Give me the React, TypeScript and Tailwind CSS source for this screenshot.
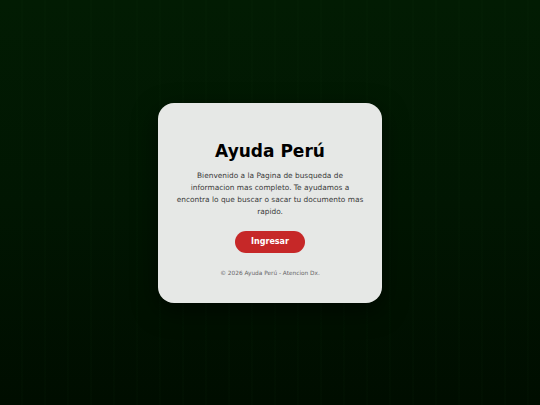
import React from "react";

/** Landing card for "Ayuda Perú" over a dark green backdrop. */
export default function App() {
  return (
    <div
      className="flex h-[405px] w-full items-center justify-center bg-[linear-gradient(180deg,#021c03_0%,#011602_50%,#000d00_100%)]"
      style={{ fontFamily: '"DejaVu Sans", Verdana, sans-serif' }}
    >
      <div className="relative h-full w-full">
        {/* faint vertical streaks */}
        <div className="absolute inset-0 bg-[repeating-linear-gradient(90deg,transparent_0px,transparent_21px,rgba(20,60,20,0.12)_22px,transparent_23px)]" />
        <div className="absolute inset-0 flex items-center justify-center">
          <div className="flex h-[200px] w-[224px] flex-col items-center rounded-[16px] bg-[#e6e8e6] px-[18px] pt-[38px] text-center shadow-[0_8px_24px_rgba(0,0,0,0.55)]">
            <h1 className="text-[17px] font-bold leading-[20px] text-black">Ayuda Perú</h1>
            <p className="mt-[9px] text-[7.4px] leading-[12px] text-[#3a3a3a]">
              Bienvenido a la Pagina de busqueda de informacion mas completo. Te ayudamos a
              encontra lo que buscar o sacar tu documento mas rapido.
            </p>
            <button className="mt-[13px] h-[22px] w-[70px] rounded-full bg-[#c62828] text-[8px] font-bold text-white">
              Ingresar
            </button>
            <p className="mt-[15px] text-[5.8px] leading-[10px] text-[#666]">
              © 2026 Ayuda Perú - Atencion Dx.
            </p>
          </div>
        </div>
      </div>
    </div>
  );
}
